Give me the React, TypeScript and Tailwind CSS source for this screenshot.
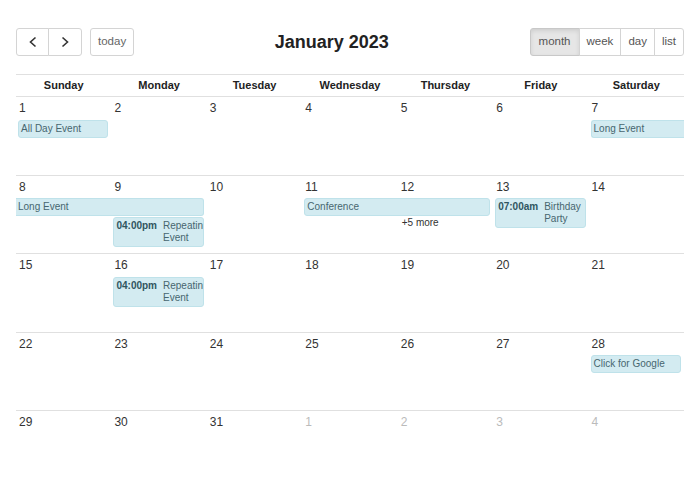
type Ev = {
  title: string;
  time?: string;
  cls: string;
  contL?: boolean;
  contR?: boolean;
};

type Week = {
  days: { n: number; other?: boolean }[];
  events: Ev[];
  more?: string;
  last?: boolean;
};

const dayNames = ["Sunday", "Monday", "Tuesday", "Wednesday", "Thursday", "Friday", "Saturday"];

const range = (a: number, b: number) => Array.from({ length: b - a + 1 }, (_, i) => ({ n: a + i }));

const weeks: Week[] = [
  {
    days: range(1, 7),
    events: [
      { title: "All Day Event", cls: "col-start-1 col-span-1 row-start-2" },
      { title: "Long Event", cls: "col-start-7 col-span-1 row-start-2", contR: true },
    ],
  },
  {
    days: range(8, 14),
    events: [
      { title: "Long Event", cls: "col-start-1 col-span-2 row-start-2", contL: true },
      { title: "Conference", cls: "col-start-4 col-span-2 row-start-2" },
      { title: "Birthday Party", time: "07:00am", cls: "col-start-6 col-span-1 row-start-2 row-span-2" },
      { title: "Repeating Event", time: "04:00pm", cls: "col-start-2 col-span-1 row-start-3" },
    ],
    more: "col-start-5 row-start-3",
  },
  {
    days: range(15, 21),
    events: [{ title: "Repeating Event", time: "04:00pm", cls: "col-start-2 col-span-1 row-start-2" }],
  },
  {
    days: range(22, 28),
    events: [{ title: "Click for Google", cls: "col-start-7 col-span-1 row-start-2" }],
  },
  {
    days: [...range(29, 31), ...range(1, 4).map((d) => ({ ...d, other: true }))],
    events: [],
    last: true,
  },
];

function Chevron({ left }: { left?: boolean }) {
  return (
    <svg width="8" height="12" viewBox="0 0 8 12" fill="none" stroke="#333" strokeWidth="1.6">
      {left ? <polyline points="6.5,1.5 1.5,6 6.5,10.5" /> : <polyline points="1.5,1.5 6.5,6 1.5,10.5" />}
    </svg>
  );
}

function EventChip({ ev }: { ev: Ev }) {
  const radius = ev.contL ? "rounded-r-[3px]" : ev.contR ? "rounded-l-[3px]" : "rounded-[3px]";
  const margin = ev.contL ? "ml-0 mr-[3px]" : ev.contR ? "ml-[2px] mr-0" : "ml-[2px] mr-[3px]";
  return (
    <div
      className={`${ev.cls} ${radius} ${margin} self-start mb-[1px] border border-[#bfe2ea] bg-[#d3ebf1] text-[10px] leading-[12px] text-[#47666f] overflow-hidden ${
        ev.contL ? "border-l-0" : ""
      } ${ev.contR ? "border-r-0" : ""}`}
    >
      {ev.time ? (
        <div className="flex gap-[6px] py-[2px] pl-[2px] pr-0">
          <span className="flex-none font-bold text-[#2f5560]">{ev.time}</span>
          <span className="min-w-0 overflow-hidden break-normal">{ev.title}</span>
        </div>
      ) : (
        <div className="whitespace-nowrap py-[2px] pl-[2px]">{ev.title}</div>
      )}
    </div>
  );
}

export default function App() {
  return (
    <div className="w-[700px] h-[500px] overflow-hidden bg-white px-4 pt-[28px] font-['Liberation_Sans',Arial,sans-serif] text-[#333]">
      {/* toolbar */}
      <div className="flex h-[28px] items-center justify-between">
        <div className="flex items-center gap-2">
          <div className="flex h-[28px]">
            <button className="flex w-[33px] items-center justify-center rounded-l-[3px] border border-[#d4d4d4] bg-white">
              <Chevron left />
            </button>
            <button className="-ml-px flex w-[34px] items-center justify-center rounded-r-[3px] border border-[#d4d4d4] bg-white">
              <Chevron />
            </button>
          </div>
          <button className="h-[28px] rounded-[3px] border border-[#d4d4d4] bg-white px-[7px] text-[11.5px] text-[#666]">
            today
          </button>
        </div>
        <h2 className="text-[18px] font-bold text-[#222]">January 2023</h2>
        <div className="flex h-[28px] text-[11.5px] text-[#555]">
          <button className="rounded-l-[3px] border border-[#c8c8c8] bg-[#e6e6e6] px-[8px] shadow-[inset_0_2px_4px_rgba(0,0,0,0.1)]">
            month
          </button>
          <button className="-ml-px border border-[#d4d4d4] bg-white px-[7px]">week</button>
          <button className="-ml-px border border-[#d4d4d4] bg-white px-[7px]">day</button>
          <button className="-ml-px rounded-r-[3px] border border-[#d4d4d4] bg-white px-[7px]">list</button>
        </div>
      </div>

      {/* calendar */}
      <div className="mt-[18px]">
        <div className="grid h-[23px] grid-cols-7 items-center border-y border-[#e0e0e0] text-[11px] font-bold text-[#222]">
          {dayNames.map((d) => (
            <div key={d} className="text-center">
              {d}
            </div>
          ))}
        </div>
        {weeks.map((w, wi) => (
          <div
            key={wi}
            className={`grid h-[78.5px] grid-cols-7 content-start ${w.last ? "" : "border-b border-[#e0e0e0]"}`}
          >
            {w.days.map((d, di) => (
              <div
                key={di}
                className={`row-start-1 h-[22.5px] pl-[3px] pt-[4px] text-[12px] leading-[14px] ${
                  d.other ? "text-[#bbb]" : "text-[#333]"
                }`}
              >
                {d.n}
              </div>
            ))}
            {w.events.map((ev, ei) => (
              <EventChip key={ei} ev={ev} />
            ))}
            {w.more && (
              <div className={`${w.more} pl-[4px] text-[10px] leading-[12px] text-[#333]`}>+5 more</div>
            )}
          </div>
        ))}
      </div>
    </div>
  );
}
